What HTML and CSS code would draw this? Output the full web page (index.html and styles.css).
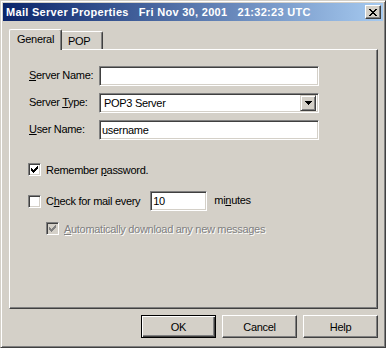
FILE: index.html
```html
<!DOCTYPE html>
<html lang="en">
<head>
  <meta charset="UTF-8">
  <title>Mail Server Properties</title>
  <link rel="stylesheet" href="styles.css">
</head>
<body>
  <div class="window">
    <div class="titlebar">
      <span class="title">Mail Server Properties   Fri Nov 30, 2001   21:32:23 UTC</span>
      <span class="close">
        <svg width="8" height="7" viewBox="0 0 8 7" shape-rendering="crispEdges"><path d="M0 0h2v1h-2z M6 0h2v1h-2z M1 1h2v1h-2z M5 1h2v1h-2z M2 2h4v1h-4z M3 3h2v1h-2z M2 4h4v1h-4z M1 5h2v1h-2z M5 5h2v1h-2z M0 6h2v1h-2z M6 6h2v1h-2z" fill="#000"/></svg>
      </span>
    </div>

    <div class="client">
      <div class="tabs">
        <div class="tab active">General</div>
        <div class="tab">POP</div>
      </div>

      <div class="panel">
        <div class="fields">
          <label><u>S</u>erver Name:</label>
          <div class="edit"></div>
          <label>Server <u>T</u>ype:</label>
          <div class="edit combo">
            <span class="combo-text">POP3 Server</span>
            <span class="drop">
              <svg width="7" height="4" viewBox="0 0 7 4" shape-rendering="crispEdges"><path d="M0 0h7v1h-7z M1 1h5v1h-5z M2 2h3v1h-3z M3 3h1v1h-1z" fill="#000"/></svg>
            </span>
          </div>
          <label><u>U</u>ser Name:</label>
          <div class="edit">username</div>
        </div>

        <div class="check-row remember">
          <span class="checkbox">
            <svg width="7" height="7" viewBox="0 0 7 7" shape-rendering="crispEdges"><path d="M0 2h1v3h-1z M1 3h1v3h-1z M2 4h1v3h-1z M3 3h1v3h-1z M4 2h1v3h-1z M5 1h1v3h-1z M6 0h1v3h-1z" fill="#000"/></svg>
          </span>
          <span>Remember <u>p</u>assword.</span>
        </div>

        <div class="check-row every">
          <span class="checkbox"></span>
          <span>C<u>h</u>eck for mail every</span>
          <div class="edit minutes-box">10</div>
          <span class="minutes">mi<u>n</u>utes</span>
        </div>

        <div class="check-row auto disabled">
          <span class="checkbox">
            <svg width="7" height="7" viewBox="0 0 7 7" shape-rendering="crispEdges"><path d="M0 2h1v3h-1z M1 3h1v3h-1z M2 4h1v3h-1z M3 3h1v3h-1z M4 2h1v3h-1z M5 1h1v3h-1z M6 0h1v3h-1z" fill="#808080"/></svg>
          </span>
          <span><u>A</u>utomatically download any new messages</span>
        </div>
      </div>

      <div class="buttons">
        <div class="btn default">OK</div>
        <div class="btn">Cancel</div>
        <div class="btn">Help</div>
      </div>
    </div>
  </div>
</body>
</html>
```

FILE: styles.css
```css
body {
  margin: 0;
  background: #d4d0c8;
}

.window {
  width: 386px;
  height: 348px;
  box-sizing: border-box;
  display: flex;
  flex-direction: column;
  padding: 2px;
  background: #d4d0c8;
  border: 1px solid;
  border-color: #d4d0c8 #404040 #404040 #d4d0c8;
  box-shadow: inset 1px 1px #fff, inset -1px -1px #808080;
  font-family: "Liberation Sans", Arial, sans-serif;
  font-size: 11px;
  letter-spacing: -0.3px;
  color: #000;
}

/* title bar */
.titlebar {
  height: 18px;
  display: flex;
  align-items: center;
  padding: 0 2px 0 3px;
  background: linear-gradient(to right, #0a246a, #a6caf0);
  color: #fff;
  font-weight: bold;
  letter-spacing: 0.3px;
}

.title {
  flex: 1;
  white-space: pre;
}

.close {
  width: 16px;
  height: 14px;
  box-sizing: border-box;
  display: flex;
  align-items: center;
  justify-content: center;
  background: #d4d0c8;
  border: 1px solid;
  border-color: #fff #404040 #404040 #fff;
  box-shadow: inset -1px -1px #808080;
}

/* dialog body */
.client {
  flex: 1;
  display: flex;
  flex-direction: column;
  padding: 8px 5px 7px 6px;
}

.tabs {
  height: 20px;
  display: flex;
  align-items: flex-end;
  position: relative;
  z-index: 1;
}

.tab {
  height: 18px;
  box-sizing: border-box;
  padding: 3px 0 0 7px;
  background: #d4d0c8;
  border: 1px solid;
  border-bottom: none;
  border-color: #fff #404040 #404040 #fff;
  box-shadow: inset -1px 0 #808080;
  border-top-left-radius: 2px;
  border-top-right-radius: 2px;
  width: 43px;
  margin-left: -2px;
}

.tab.active {
  height: 21px;
  width: 53px;
  margin-left: 0;
  margin-bottom: -1px;
  padding: 3px 0 0 7px;
  position: relative;
  z-index: 2;
}

.panel {
  flex: 1;
  padding: 16px 0 0 19px;
  border: 1px solid;
  border-color: #fff #404040 #404040 #fff;
  box-shadow: inset -1px -1px #808080;
}

.fields {
  display: grid;
  grid-template-columns: 70px 220px;
  grid-auto-rows: 20px;
  row-gap: 7px;
  align-items: center;
}

.fields label {
  padding-bottom: 2px;
}

.edit {
  height: 20px;
  box-sizing: border-box;
  display: flex;
  align-items: center;
  padding: 0 2px;
  background: #fff;
  border: 1px solid;
  border-color: #808080 #fff #fff #808080;
  box-shadow: inset 1px 1px #404040, inset -1px -1px #d4d0c8;
}

.combo {
  padding: 0 2px 0 4px;
}

.combo-text {
  flex: 1;
}

.drop {
  width: 16px;
  height: 16px;
  box-sizing: border-box;
  display: flex;
  align-items: center;
  justify-content: center;
  background: #d4d0c8;
  border: 1px solid;
  border-color: #d4d0c8 #404040 #404040 #d4d0c8;
  box-shadow: inset 1px 1px #fff, inset -1px -1px #808080;
}

/* check boxes */
.check-row {
  display: flex;
  align-items: center;
}

.checkbox {
  width: 13px;
  height: 13px;
  box-sizing: border-box;
  display: flex;
  align-items: center;
  justify-content: center;
  margin: 0 5px 0 -1px;
  background: #fff;
  border: 1px solid;
  border-color: #808080 #fff #fff #808080;
  box-shadow: inset 1px 1px #404040, inset -1px -1px #d4d0c8;
}

.remember {
  height: 13px;
  margin-top: 23px;
}

.every {
  height: 20px;
  margin-top: 15px;
}

.minutes-box {
  width: 57px;
  margin: 0 7px 0 10px;
}

.minutes {
  padding-bottom: 3px;
}

.auto {
  height: 13px;
  margin: 11px 0 0 18px;
}

.disabled {
  color: #808080;
  text-shadow: 1px 1px #fff;
}

.disabled .checkbox {
  background: #d4d0c8;
}

/* buttons */
.buttons {
  display: flex;
  justify-content: flex-end;
  gap: 6px;
  margin-top: 6px;
}

.btn {
  width: 75px;
  height: 23px;
  box-sizing: border-box;
  display: flex;
  align-items: center;
  justify-content: center;
  background: #d4d0c8;
  border: 1px solid;
  border-color: #fff #404040 #404040 #fff;
  box-shadow: inset -1px -1px #808080;
}

.btn.default {
  border-color: #000;
  box-shadow: inset 1px 1px #fff, inset -1px -1px #404040, inset -2px -2px #808080;
}
```
